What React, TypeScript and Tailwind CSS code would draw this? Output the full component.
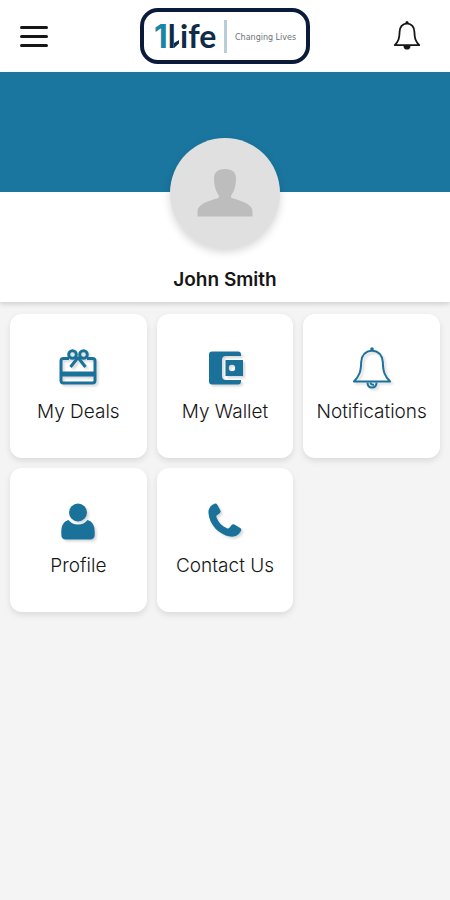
import type { ReactNode } from "react";

type MenuItem = {
  label: string;
  href: string;
  icon: ReactNode;
};

const menuItems: MenuItem[] = [
  { label: "My Deals", href: "#deals", icon: <GiftCardIcon /> },
  { label: "My Wallet", href: "#wallet", icon: <WalletIcon /> },
  { label: "Notifications", href: "#notifications", icon: <BellIcon /> },
  { label: "Profile", href: "#profile", icon: <PersonIcon /> },
  { label: "Contact Us", href: "#contact", icon: <PhoneIcon /> },
];

export default function App() {
  return (
    <div className="flex min-h-screen flex-col bg-[#f4f4f4] font-[Inter,sans-serif] text-[#161616]">
      <Header />
      <main>
        <ProfileBanner name="John Smith" />
        <nav className="grid grid-cols-3 gap-[10px] px-[10px] py-3">
          {menuItems.map((item) => (
            <MenuCard key={item.label} item={item} />
          ))}
        </nav>
      </main>
    </div>
  );
}

function Header() {
  return (
    <header className="grid h-[72px] grid-cols-[1fr_auto_1fr] items-center bg-white px-5">
      <button
        type="button"
        aria-label="Menu"
        className="flex w-7 cursor-pointer flex-col gap-[6px]"
      >
        <span className="h-[3px] w-full rounded-xs bg-[#161616]" />
        <span className="h-[3px] w-full rounded-xs bg-[#161616]" />
        <span className="h-[3px] w-full rounded-xs bg-[#161616]" />
      </button>
      <Logo />
      <button
        type="button"
        aria-label="Notifications"
        className="mr-2 cursor-pointer justify-self-end"
      >
        <svg width="30" height="32" viewBox="0 0 30 32" fill="none">
          <path
            d="M15 3.400c-4.600.6-7.200 3.800-7.400 8.400-.2 6.400-.8 9-4.800 13.400h24.400c-4-4.400-4.600-7-4.800-13.400-.2-4.600-2.800-7.800-7.400-8.400Z"
            stroke="#161616"
            strokeWidth="1.800"
            strokeLinejoin="round"
          />
          <circle cx="15" cy="2.600" r="1.500" fill="#161616" />
          <path d="M11.500 26h7c0 2.500-1.500 3.600-3.500 3.600s-3.500-1.100-3.500-3.600Z" fill="#161616" />
        </svg>
      </button>
    </header>
  );
}

function Logo() {
  return (
    <div className="flex h-14 w-[170px] items-center rounded-[18px] border-4 border-[#0a1a3a] bg-white">
      <svg width="162" height="48" viewBox="0 0 162 48">
        <text
          x="10"
          y="36"
          fontFamily="Lato, sans-serif"
          fontSize="32"
          fontWeight="700"
          fill="#0f2b47"
        >
          <tspan fontFamily="Inter, sans-serif" fill="#1a85a8">
            1
          </tspan>
          <tspan>l</tspan>
          <tspan x="36">ife</tspan>
        </text>
        {/* foot of the l, mirrors the flag of the 1 */}
        <path d="M30 36l5-4.500v-3.500l-5 3Z" fill="#0f2b47" />
        <rect x="80" y="8" width="3" height="33" fill="#b9cdd8" />
        <text
          x="91"
          y="28"
          fontFamily="'DejaVu Sans', sans-serif"
          fontSize="8"
          fill="#6b737b"
        >
          Changing Lives
        </text>
      </svg>
    </div>
  );
}

function ProfileBanner({ name }: { name: string }) {
  return (
    <section className="bg-white shadow-[0_2px_5px_rgba(0,0,0,0.16)]">
      <div className="h-[120px] bg-[#1a769f]" />
      <div className="-mt-[54px] flex flex-col items-center pb-2">
        <div className="flex size-[110px] items-center justify-center rounded-full bg-[#e0e0e0] shadow-[0_4px_8px_rgba(0,0,0,0.16)]">
          <svg width="56" height="48" viewBox="0 0 56 48" fill="#bdbdbd">
            <path d="M28 0c7.500 0 11 3.500 11 9.500 0 7-1.500 12-4.500 16.500-.8 1.200-.8 2.500.8 3.200C45 32 55 35 55.500 42v5.500H.5V42C1 35 11 32 20.700 29.200c1.600-.7 1.600-2 .8-3.200C18.500 21.500 17 16.500 17 9.500 17 3.500 20.500 0 28 0Z" />
          </svg>
        </div>
        <h1 className="mt-[18px] text-[19px] leading-7 font-semibold">{name}</h1>
      </div>
    </section>
  );
}

function MenuCard({ item }: { item: MenuItem }) {
  return (
    <a
      href={item.href}
      className="flex h-36 flex-col items-center rounded-xl bg-white pt-8 shadow-[0_3px_6px_rgba(0,0,0,0.1)]"
    >
      <span className="drop-shadow-[2px_2px_1px_rgba(0,0,0,0.15)]">
        {item.icon}
      </span>
      <span className="mt-1 text-[19px] leading-6 font-light whitespace-nowrap">
        {item.label}
      </span>
    </a>
  );
}

function GiftCardIcon() {
  return (
    <svg width="44" height="50" viewBox="0 0 44 50" fill="none" stroke="#1a729b">
      <path
        d="M13 12.500H7.500a2.500 2.500 0 0 0-2.500 2.500v19.500a2.500 2.500 0 0 0 2.500 2.500h29a2.500 2.500 0 0 0 2.500-2.500V15a2.500 2.500 0 0 0-2.500-2.500H31"
        strokeWidth="3"
      />
      <path d="M5 28h34" strokeWidth="5" />
      <circle cx="16.500" cy="8.500" r="3.800" strokeWidth="3" />
      <circle cx="27.500" cy="8.500" r="3.800" strokeWidth="3" />
      <path d="M19 12h6M22 11.500l-7.500 9.500M22 11.500l7.500 9.500" strokeWidth="3" />
    </svg>
  );
}

function WalletIcon() {
  return (
    <svg width="44" height="50" viewBox="0 0 44 50" fill="#1a729b">
      <path d="M9 5.500h26a3 3 0 0 1 3 3V10H23a4 4 0 0 0-4 4v16a4 4 0 0 0 4 4h15v1.500a3 3 0 0 1-3 3H9a3 3 0 0 1-3-3v-27a3 3 0 0 1 3-3Z" />
      <path
        fillRule="evenodd"
        d="M22.500 14H40v16H22.500ZM29 18.800a3.200 3.200 0 1 0 0 6.400 3.200 3.200 0 0 0 0-6.400Z"
      />
    </svg>
  );
}

function BellIcon() {
  return (
    <svg width="44" height="50" viewBox="0 0 44 50" fill="none" stroke="#1a729b">
      <path
        d="M22 4.500c-6.500.8-10.500 5-10.800 11.500C10.900 26 9.500 29.500 4 35.500h36c-5.500-6-6.900-9.500-7.200-19.500C32.500 9.500 28.500 5.300 22 4.500Z"
        strokeWidth="2"
        strokeLinejoin="round"
      />
      <circle cx="22" cy="3" r="1.800" fill="#1a729b" stroke="none" />
      <path d="M17.500 36.500c0 3.500 2 5 4.500 5s4.500-1.500 4.500-5" strokeWidth="2" />
      <path d="M20.500 36.500c0 1.500 1.500 2.500 3.500 2.200" strokeWidth="2" />
    </svg>
  );
}

function PersonIcon() {
  return (
    <svg width="44" height="50" viewBox="0 0 44 50" fill="#1a729b">
      <circle cx="22" cy="12.500" r="9" />
      <path d="M12.500 20C15 23 18 24.500 22 24.500s7-1.500 9.500-4.500c5 1.500 7.200 5.500 7.200 12v3c0 2.800-1.700 4.500-4.500 4.500H9.800c-2.800 0-4.500-1.700-4.500-4.500v-3c0-6.500 2.200-10.500 7.200-12Z" />
    </svg>
  );
}

function PhoneIcon() {
  return (
    <svg width="44" height="50" viewBox="0 0 44 50" fill="#1a729b">
      <path d="M11.500 3.800c1.200-.5 2.200 0 2.800 1l3 5.500c.7 1.300.3 2.500-.9 3.300l-2.400 1.600c-.8.600-.8 1.500-.4 2.500 2 5 5.700 8.600 10.400 10.600 1 .4 1.800.2 2.400-.6l2-2.500c.8-1 1.900-1.200 3-.6l5.800 3.300c1.100.7 1.400 1.600.9 2.700-1.900 4.500-6 6.700-11.100 5.900C15.500 34.500 6.500 24.500 5.500 13.500c-.4-4.900 1.900-8.100 6-9.700Z" />
    </svg>
  );
}
